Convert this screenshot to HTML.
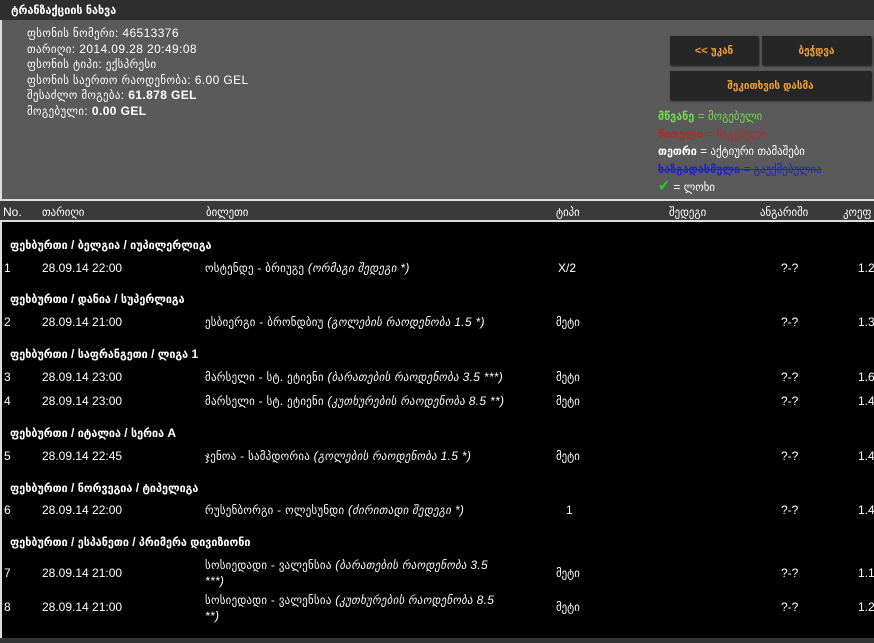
<!DOCTYPE html>
<html><head><meta charset="utf-8"><style>
*{margin:0;padding:0;box-sizing:border-box}
body{width:874px;height:643px;background:#000;overflow:hidden;position:relative;font-family:"Liberation Sans","DejaVu Sans",sans-serif;font-size:12px;color:#fff}
.a{position:absolute;white-space:nowrap}
.g{font-family:"Liberation Sans","DejaVu Sans Condensed","DejaVu Sans",sans-serif}
.btn{position:absolute;background:#262626;color:#f0a030;font-weight:bold;font-size:11px;text-align:center;line-height:30px;box-shadow:1px 1px 2px #111}
.b{font-weight:bold}
i{font-style:italic}
.t{letter-spacing:0.3px}
</style></head><body>
<div class="a" style="left:0;top:0;width:874px;height:20px;background:#2e2e2e"></div>
<div class="a b g" style="left:11px;top:3px;font-size:12px">ტრანზაქციის ნახვა</div>
<div class="a" style="left:0;top:20px;width:874px;height:179px;background:#5a5a5a;border-left:2px solid #ddd"></div>
<div class="a g" style="left:27px;top:26px;line-height:15.5px;font-size:12px;letter-spacing:0.4px">ფსონის ნომერი: 46513376<br>თარიღი: 2014.09.28 20:49:08<br>ფსონის ტიპი: ექსპრესი<br>ფსონის საერთო რაოდენობა: 6.00 GEL<br>შესაძლო მოგება: <b>61.878 GEL</b><br>მოგებული: <b>0.00 GEL</b></div>
<div class="btn g" style="left:670px;top:36px;width:88px;height:29px">&lt;&lt; უკან</div>
<div class="btn g" style="left:762px;top:36px;width:109px;height:29px">ბეჭდვა</div>
<div class="btn g" style="left:670px;top:71px;width:201px;height:29px">შეკითხვის დასმა</div>
<div class="a g" style="left:658px;top:108px;line-height:17.5px;font-size:12px">
<span style="color:#6fdc4a"><b>მწვანე</b> = მოგებული</span><br>
<span style="color:#b02a2a"><b>წითელი</b> = წაგებული</span><br>
<span style="color:#fff"><b>თეთრი</b> = აქტიური თამაშები</span><br>
<span style="color:#2020d0;text-decoration:line-through"><b>ხაზგადასმული</b> = გაუქმებულია</span><br>
<span style="color:#22cc22;font-size:16px;font-weight:bold">✔</span> = ლოხი</div>
<div class="a" style="left:0;top:199px;width:874px;height:23px;background:#3a3a3a;border-top:2px solid #ddd;border-bottom:2px solid #ddd"></div>
<div class="a g" style="left:3px;top:205px">No.</div>
<div class="a g" style="left:42px;top:205px">თარიღი</div>
<div class="a g" style="left:206px;top:205px">ბილეთი</div>
<div class="a g" style="left:556px;top:205px">ტიპი</div>
<div class="a g" style="left:669px;top:205px">შედეგი</div>
<div class="a g" style="left:760px;top:205px">ანგარიში</div>
<div class="a g" style="left:843px;top:205px">კოეფ</div>
<div class="a" style="left:0;top:222px;width:2px;height:421px;background:#ddd"></div>
<div class="a" style="left:0;top:638px;width:874px;height:5px;background:#333"></div>

<div class="a b g" style="left:10px;top:238px">ფეხბურთი / ბელგია / იუპილერლიგა</div>
<div class="a g" style="left:4px;top:261px">1</div><div class="a" style="left:42px;top:261px">28.09.14 22:00</div><div class="a g t" style="left:205px;top:261px">ოსტენდე - ბრიუგე <i>(ორმაგი შედეგი *)</i></div><div class="a" style="left:558px;top:261px">X/2</div><div class="a" style="left:781px;top:261px">?-?</div><div class="a" style="left:858px;top:261px">1.25</div>

<div class="a b g" style="left:10px;top:292px">ფეხბურთი / დანია / სუპერლიგა</div>
<div class="a g" style="left:4px;top:315px">2</div><div class="a" style="left:42px;top:315px">28.09.14 21:00</div><div class="a g t" style="left:205px;top:315px">ესბიერგი - ბრონდბიუ <i>(გოლების რაოდენობა 1.5 *)</i></div><div class="a g" style="left:556px;top:315px">მეტი</div><div class="a" style="left:781px;top:315px">?-?</div><div class="a" style="left:858px;top:315px">1.35</div>

<div class="a b g" style="left:10px;top:347px">ფეხბურთი / საფრანგეთი / ლიგა 1</div>
<div class="a g" style="left:4px;top:370px">3</div><div class="a" style="left:42px;top:370px">28.09.14 23:00</div><div class="a g t" style="left:205px;top:370px">მარსელი - სტ. ეტიენი <i>(ბარათების რაოდენობა 3.5 ***)</i></div><div class="a g" style="left:556px;top:370px">მეტი</div><div class="a" style="left:781px;top:370px">?-?</div><div class="a" style="left:858px;top:370px">1.60</div>
<div class="a g" style="left:4px;top:394px">4</div><div class="a" style="left:42px;top:394px">28.09.14 23:00</div><div class="a g t" style="left:205px;top:394px">მარსელი - სტ. ეტიენი <i>(კუთხურების რაოდენობა 8.5 **)</i></div><div class="a g" style="left:556px;top:394px">მეტი</div><div class="a" style="left:781px;top:394px">?-?</div><div class="a" style="left:858px;top:394px">1.40</div>

<div class="a b g" style="left:10px;top:426px">ფეხბურთი / იტალია / სერია A</div>
<div class="a g" style="left:4px;top:449px">5</div><div class="a" style="left:42px;top:449px">28.09.14 22:45</div><div class="a g t" style="left:205px;top:449px">ჯენოა - სამპდორია <i>(გოლების რაოდენობა 1.5 *)</i></div><div class="a g" style="left:556px;top:449px">მეტი</div><div class="a" style="left:781px;top:449px">?-?</div><div class="a" style="left:858px;top:449px">1.40</div>

<div class="a b g" style="left:10px;top:481px">ფეხბურთი / ნორვეგია / ტიპელიგა</div>
<div class="a g" style="left:4px;top:503px">6</div><div class="a" style="left:42px;top:503px">28.09.14 22:00</div><div class="a g t" style="left:205px;top:503px">რუსენბორგი - ოლესუნდი <i>(ძირითადი შედეგი *)</i></div><div class="a" style="left:566px;top:503px">1</div><div class="a" style="left:781px;top:503px">?-?</div><div class="a" style="left:858px;top:503px">1.45</div>

<div class="a b g" style="left:10px;top:535px">ფეხბურთი / ესპანეთი / პრიმერა დივიზიონი</div>
<div class="a g" style="left:4px;top:566px">7</div><div class="a" style="left:42px;top:566px">28.09.14 21:00</div><div class="a g t" style="left:205px;top:557px;line-height:16px">სოსიედადი - ვალენსია <i>(ბარათების რაოდენობა 3.5<br>***)</i></div><div class="a g" style="left:556px;top:566px">მეტი</div><div class="a" style="left:781px;top:566px">?-?</div><div class="a" style="left:858px;top:566px">1.12</div>
<div class="a g" style="left:4px;top:600px">8</div><div class="a" style="left:42px;top:600px">28.09.14 21:00</div><div class="a g t" style="left:205px;top:592px;line-height:16px">სოსიედადი - ვალენსია <i>(კუთხურების რაოდენობა 8.5<br>**)</i></div><div class="a g" style="left:556px;top:600px">მეტი</div><div class="a" style="left:781px;top:600px">?-?</div><div class="a" style="left:858px;top:600px">1.20</div>
</body></html>
